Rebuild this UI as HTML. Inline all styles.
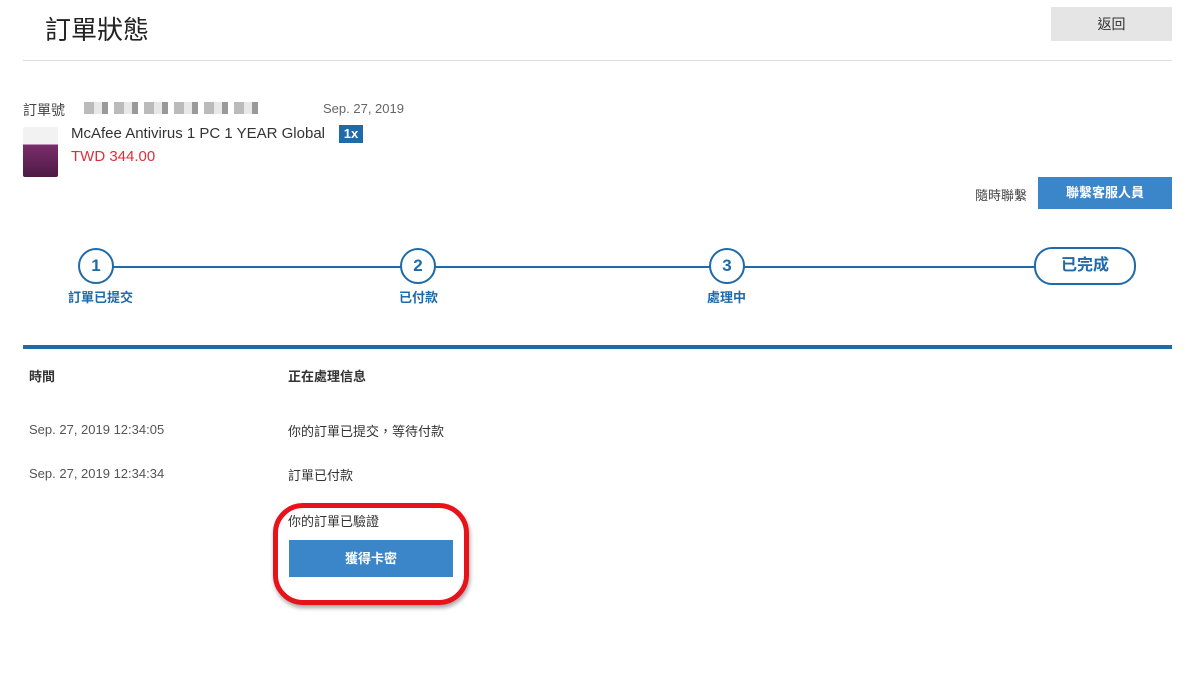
<!DOCTYPE html>
<html><head><meta charset="utf-8"><style>
body{margin:0;width:1200px;height:693px;background:#fff;font-family:"Liberation Sans","Noto Sans CJK TC",sans-serif;color:#333;position:relative;overflow:hidden}
.a{position:absolute;white-space:nowrap}
.circ{position:absolute;width:32px;height:32px;border:2px solid #1f6aa8;border-radius:50%;background:#fff;color:#1f6aa8;font-weight:bold;font-size:17px;text-align:center;line-height:32px}
.lbl{position:absolute;color:#1f6aa8;font-size:13px;font-weight:bold}
</style></head><body>
<div class="a" style="left:45px;top:10px;font-size:26px;color:#222">訂單狀態</div>
<div class="a" style="left:1051px;top:7px;width:121px;height:34px;background:#e5e5e5;text-align:center;line-height:34px;font-size:14px;color:#333">返回</div>
<div class="a" style="left:23px;top:60px;width:1149px;height:1px;background:#ddd"></div>
<div class="a" style="left:23px;top:100px;font-size:14px;color:#444">訂單號</div>
<div class="a" style="left:84px;top:102px;width:180px;height:12px;background:repeating-linear-gradient(90deg,#bbb 0 10px,#e8e8e8 10px 18px,#999 18px 24px,#fff 24px 30px)"></div>
<div class="a" style="left:323px;top:101px;font-size:13px;color:#666">Sep. 27, 2019</div>
<div class="a" style="left:23px;top:127px;width:35px;height:50px;background:linear-gradient(180deg,#f2f2f2 0 35%,#7a2d6c 35%,#4d1a44 100%);border-radius:2px"></div>
<div class="a" style="left:71px;top:125px;font-size:15px;color:#333">McAfee Antivirus 1 PC 1 YEAR Global</div>
<div class="a" style="left:339px;top:125px;width:24px;height:18px;background:#1f6aa8;color:#fff;font-size:13px;text-align:center;line-height:18px;font-weight:bold">1x</div>
<div class="a" style="left:71px;top:148px;font-size:15px;color:#d9303a">TWD 344.00</div>
<div class="a" style="left:975px;top:185px;font-size:13px;color:#444">隨時聯繫</div>
<div class="a" style="left:1038px;top:177px;width:134px;height:32px;background:#3a86c8;color:#fff;font-size:13px;text-align:center;line-height:32px;font-weight:bold">聯繫客服人員</div>
<div class="a" style="left:96px;top:266px;width:1000px;height:2px;background:#1f6aa8"></div>
<div class="circ" style="left:78px;top:248px">1</div>
<div class="circ" style="left:400px;top:248px">2</div>
<div class="circ" style="left:709px;top:248px">3</div>
<div class="a" style="left:1034px;top:247px;width:98px;height:34px;border:2px solid #1f6aa8;border-radius:18px;background:#fff;color:#1f6aa8;font-size:16px;font-weight:bold;text-align:center;line-height:34px">已完成</div>
<div class="lbl" style="left:68px;top:287px">訂單已提交</div>
<div class="lbl" style="left:399px;top:287px">已付款</div>
<div class="lbl" style="left:707px;top:287px">處理中</div>
<div class="a" style="left:23px;top:345px;width:1149px;height:4px;background:#1f6aa8"></div>
<div class="a" style="left:29px;top:366px;font-size:13px;font-weight:bold;color:#333">時間</div>
<div class="a" style="left:288px;top:366px;font-size:13px;font-weight:bold;color:#333">正在處理信息</div>
<div class="a" style="left:29px;top:422px;font-size:13px;color:#555">Sep. 27, 2019 12:34:05</div>
<div class="a" style="left:288px;top:421px;font-size:13px;color:#333">你的訂單已提交，等待付款</div>
<div class="a" style="left:29px;top:466px;font-size:13px;color:#555">Sep. 27, 2019 12:34:34</div>
<div class="a" style="left:288px;top:465px;font-size:13px;color:#333">訂單已付款</div>
<div class="a" style="left:288px;top:511px;font-size:13px;color:#333">你的訂單已驗證</div>
<div class="a" style="left:289px;top:540px;width:164px;height:37px;background:#3a86c8;color:#fff;font-size:13px;font-weight:bold;text-align:center;line-height:37px">獲得卡密</div>
<div class="a" style="left:273px;top:503px;width:186px;height:92px;border:5px solid #e8121a;border-radius:30px;box-shadow:1px 3px 4px rgba(0,0,0,.35)"></div>
</body></html>
